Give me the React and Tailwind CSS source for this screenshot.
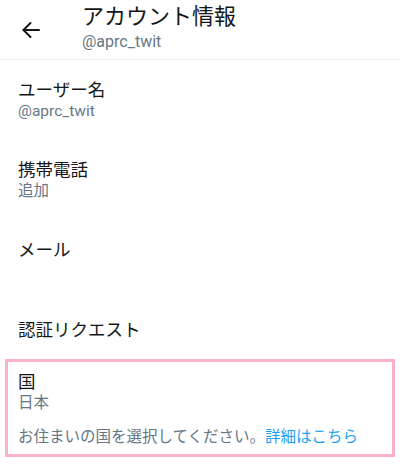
const FONT = { fontFamily: 'Roboto, "Noto Sans CJK JP", "Noto Sans", sans-serif' }

function BackArrow() {
  return (
    <svg width="24" height="24" viewBox="0 0 24 24" fill="none" stroke="#14171a" strokeWidth="2" strokeLinecap="round" strokeLinejoin="round">
      <path d="M20 12H4.5" />
      <path d="M11.5 5l-7 7 7 7" />
    </svg>
  )
}

function Row({ title, sub, height = 'h-[80px]' }) {
  return (
    <div className={`${height} px-[18px] pt-[19px]`}>
      <p className="text-[17.5px] leading-[22px] text-[#14171a]">{title}</p>
      {sub ? <p className="text-[15.5px] leading-[20px] text-[#657786]">{sub}</p> : null}
    </div>
  )
}

export default function App() {
  return (
    <div className="h-[465px] w-[400px] overflow-hidden bg-white" style={FONT}>
      <header className="flex h-[60px] items-start border-b border-[#e6ecf0]">
        <div className="flex w-[82px] pl-[19px] pt-[18px]">
          <BackArrow />
        </div>
        <div className="pt-[3px]">
          <h1 className="text-[22px] leading-[28px] text-[#14171a]">アカウント情報</h1>
          <p className="text-[16px] leading-[22px] text-[#657786]">@aprc_twit</p>
        </div>
      </header>

      <Row title="ユーザー名" sub="@aprc_twit" />
      <Row title="携帯電話" sub="追加" />
      <Row title="メール" />
      <Row title="認証リクエスト" height="h-[59px]" />

      <div className="mx-[5px] h-[98px] border-[3px] border-[#ffb0cc] pl-[10px] pt-[9px]">
        <p className="text-[17.5px] leading-[22px] text-[#14171a]">国</p>
        <p className="text-[15.5px] leading-[20px] text-[#657786]">日本</p>
        <p className="mt-[14px] text-[15.5px] leading-[20px] text-[#657786]">
          お住まいの国を選択してください。<span className="text-[#1da1f2]">詳細はこちら</span>
        </p>
      </div>
    </div>
  )
}
